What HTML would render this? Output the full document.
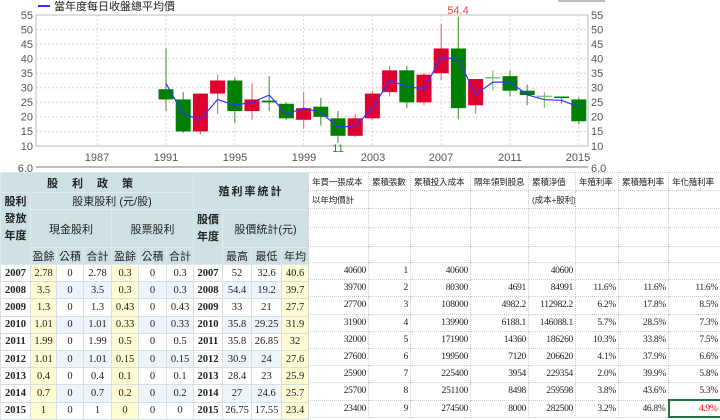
<!DOCTYPE html>
<html><head><meta charset="utf-8">
<style>
*{margin:0;padding:0;box-sizing:border-box}
body{width:720px;height:420px;overflow:hidden;background:#fff;font-family:"Liberation Sans","Noto Sans CJK TC",sans-serif;position:relative}
svg text{font-family:"Liberation Sans",sans-serif;font-size:11px;fill:#555}
table{border-collapse:collapse;position:absolute;top:172px;table-layout:fixed}
#L{left:0;width:308px}
#L td{border:1px solid #d4e0e6;text-align:center;font-family:"Liberation Serif","Noto Serif CJK SC",serif;font-size:10.5px;color:#222;padding:0;white-space:nowrap;overflow:hidden}
#L td.h{background:#cde1e5;font-family:"Liberation Sans","Noto Sans CJK TC",sans-serif;font-size:11px;color:#222;border-color:#dfeaee}
#L td.b{font-weight:bold;background:#fff}
#L tr.d td{height:17.2px}
#L tr.e td{background:#edf5fb}
#L tr.d td.y{background:#fffbd3}
#L tr.d td.b{background:#fff}
#R{left:308px;width:412px}
#R td{border:1px dotted #ccc;font-family:"Liberation Serif",serif;font-size:9.5px;color:#222;text-align:right;padding:0 2px;white-space:nowrap;overflow:hidden;letter-spacing:-0.3px}
#R tr.d td{height:17.2px}
#R td.t{text-align:left;font-family:"Liberation Sans","Noto Sans CJK TC",sans-serif;font-size:8.6px;padding-left:3px;letter-spacing:-0.2px}
</style></head><body>
<svg id="c" width="720" height="172" style="position:absolute;left:0;top:0">
<line x1="38" y1="6" x2="50" y2="6" stroke="#3333ff" stroke-width="2"/>
<text x="54" y="10" style="fill:#222;font-family:'Liberation Sans','Noto Sans CJK TC',sans-serif">當年度每日收盤總平均價</text>
<line x1="558" y1="1" x2="605" y2="1" stroke="#bbb" stroke-width="2"/>
<g id="grid"></g>
<rect x="36" y="15" width="552" height="131" fill="none" stroke="#bbb"/>
<g id="cand"></g>
<text x="33" y="19" text-anchor="end">55</text><text x="33" y="33.5" text-anchor="end">50</text><text x="33" y="48" text-anchor="end">45</text><text x="33" y="62.6" text-anchor="end">40</text><text x="33" y="77" text-anchor="end">35</text><text x="33" y="91.7" text-anchor="end">30</text><text x="33" y="106" text-anchor="end">25</text><text x="33" y="120.7" text-anchor="end">20</text><text x="33" y="135" text-anchor="end">15</text><text x="33" y="150" text-anchor="end">10</text>
<text x="591" y="19">55</text><text x="591" y="33.5">50</text><text x="591" y="48">45</text><text x="591" y="62.6">40</text><text x="591" y="77">35</text><text x="591" y="91.7">30</text><text x="591" y="106">25</text><text x="591" y="120.7">20</text><text x="591" y="135">15</text><text x="591" y="150">10</text>
<text x="97" y="161" text-anchor="middle">1987</text><text x="166" y="161" text-anchor="middle">1991</text><text x="235" y="161" text-anchor="middle">1995</text><text x="304" y="161" text-anchor="middle">1999</text><text x="373" y="161" text-anchor="middle">2003</text><text x="441" y="161" text-anchor="middle">2007</text><text x="510" y="161" text-anchor="middle">2011</text><text x="578" y="161" text-anchor="middle">2015</text>
<text x="458" y="14" text-anchor="middle" style="fill:#f04040">54.4</text>
<text x="338" y="152" text-anchor="middle" style="fill:#2a8a2a">11</text>
<line x1="36" y1="167" x2="588" y2="167" stroke="#bbb" stroke-width="2"/>
<text x="33" y="172" text-anchor="end">6.0</text><text x="591" y="172">6.0</text>
</svg>
<script>
(function(){
var X=function(y){return 166+(y-1991)*17.2},Y=function(v){return 146-(v-10)*2.911};
var g='';
for(var y=1987;y<=2015;y+=4){g+='<line x1="'+X(y)+'" y1="15" x2="'+X(y)+'" y2="146" stroke="#f3cccc" stroke-dasharray="2,2"/>';}
for(var v=15;v<=50;v+=5){g+='<line x1="36" y1="'+Y(v)+'" x2="588" y2="'+Y(v)+'" stroke="#f3cccc" stroke-dasharray="2,2"/>';}
document.getElementById('grid').innerHTML=g;
var G='#008000',R='#dd0030',LG='#7fc07f';
var d=[[1991,G,26,29.5,22,43.5],[1992,G,15,26,14.5,28.5],[1993,R,15,28,14,28],[1994,R,28,32.5,21,34.5],[1995,G,22,32.5,18,33.5],[1996,R,22,26,19,31.5],[1997,G,25,25.6,22,34],[1998,G,19.5,24.5,19,25],[1999,R,19,23,16,28.5],[2000,G,20,23.5,17,26.5],[2001,G,13.5,19.5,11,22],[2002,R,13.5,19.5,13,21],[2003,R,19.5,28,19,29],[2004,R,28.5,36,27,37.5],[2005,G,25,36,23,37.5],[2006,R,25,34.5,24,35],[2007,R,35,43.5,32.6,52],[2008,G,23,43.5,19.2,54.4],[2009,R,24,33,21,33],[2010,LG,33.4,33.7,29,36],[2011,G,29,34,27,36],[2012,G,27.5,29,24,31],[2013,LG,27,27.3,23,28.5],[2014,G,26.5,27,24.6,27],[2015,G,18.5,26,17.5,26.75]];
var s='';
d.forEach(function(a){var x=X(a[0]);var c=a[1];var wc=c==R?'#ee7080':(c==G?'#50a050':LG);
s+='<line x1="'+x+'" y1="'+Y(a[5])+'" x2="'+x+'" y2="'+Y(a[4])+'" stroke="'+wc+'" stroke-width="1.2"/>';
var h=Math.max(Y(a[2])-Y(a[3]),1.5);
s+='<rect x="'+(x-7.5)+'" y="'+Y(a[3])+'" width="15" height="'+h+'" fill="'+c+'"/>';});
var av=[31.5,21,19,26,24,25,27.5,21,23,21.5,16.5,16.8,23,32.5,30.5,29.5,40.6,39.7,27.7,31.9,32,27.6,25.9,25.7,23.4];
var p=av.map(function(v,i){return X(1991+i)+','+Y(v)}).join(' ');
s+='<polyline points="'+p+'" fill="none" stroke="#3333ff" stroke-width="1.2"/>';
document.getElementById('cand').innerHTML=s;
})();
</script>
<table id="L">
<colgroup><col style="width:30px"><col style="width:26px"><col style="width:27px"><col style="width:28px"><col style="width:27px"><col style="width:28px"><col style="width:27px"><col style="width:29px"><col style="width:29px"><col style="width:30px"><col style="width:27px"></colgroup>
<tr><td class="h" colspan="7" style="height:20px;font-weight:bold;letter-spacing:14px">股利政策</td><td class="h" colspan="4" rowspan="2" style="font-weight:bold;letter-spacing:2px">殖利率統計</td></tr>
<tr><td class="h" rowspan="3" style="font-weight:bold;line-height:17px;vertical-align:top;padding-top:1px">股利<br>發放<br>年度</td><td class="h" colspan="6" style="height:16px">股東股利 (元/股)</td></tr>
<tr><td class="h" colspan="3" style="height:38px">現金股利</td><td class="h" colspan="3">股票股利</td><td class="h" rowspan="2" style="font-weight:bold;line-height:17px;vertical-align:top;padding-top:2px">股價<br>年度</td><td class="h" colspan="3">股價統計(元)</td></tr>
<tr><td class="h" style="height:16px">盈餘</td><td class="h">公積</td><td class="h">合計</td><td class="h">盈餘</td><td class="h">公積</td><td class="h">合計</td><td class="h">最高</td><td class="h">最低</td><td class="h">年均</td></tr>
<tr class="d"><td class="b">2007</td><td class="y">2.78</td><td>0</td><td>2.78</td><td class="y">0.3</td><td>0</td><td>0.3</td><td class="b">2007</td><td>52</td><td>32.6</td><td class="y">40.6</td></tr>
<tr class="d e"><td class="b">2008</td><td class="y">3.5</td><td>0</td><td>3.5</td><td class="y">0.3</td><td>0</td><td>0.3</td><td class="b">2008</td><td>54.4</td><td>19.2</td><td class="y">39.7</td></tr>
<tr class="d"><td class="b">2009</td><td class="y">1.3</td><td>0</td><td>1.3</td><td class="y">0.43</td><td>0</td><td>0.43</td><td class="b">2009</td><td>33</td><td>21</td><td class="y">27.7</td></tr>
<tr class="d e"><td class="b">2010</td><td class="y">1.01</td><td>0</td><td>1.01</td><td class="y">0.33</td><td>0</td><td>0.33</td><td class="b">2010</td><td>35.8</td><td>29.25</td><td class="y">31.9</td></tr>
<tr class="d"><td class="b">2011</td><td class="y">1.99</td><td>0</td><td>1.99</td><td class="y">0.5</td><td>0</td><td>0.5</td><td class="b">2011</td><td>35.8</td><td>26.85</td><td class="y">32</td></tr>
<tr class="d e"><td class="b">2012</td><td class="y">1.01</td><td>0</td><td>1.01</td><td class="y">0.15</td><td>0</td><td>0.15</td><td class="b">2012</td><td>30.9</td><td>24</td><td class="y">27.6</td></tr>
<tr class="d"><td class="b">2013</td><td class="y">0.4</td><td>0</td><td>0.4</td><td class="y">0.1</td><td>0</td><td>0.1</td><td class="b">2013</td><td>28.4</td><td>23</td><td class="y">25.9</td></tr>
<tr class="d e"><td class="b">2014</td><td class="y">0.7</td><td>0</td><td>0.7</td><td class="y">0.2</td><td>0</td><td>0.2</td><td class="b">2014</td><td>27</td><td>24.6</td><td class="y">25.7</td></tr>
<tr class="d"><td class="b">2015</td><td class="y">1</td><td>0</td><td>1</td><td class="y">0</td><td>0</td><td>0</td><td class="b">2015</td><td>26.75</td><td>17.55</td><td class="y">23.4</td></tr>
</table>
<table id="R">
<colgroup><col style="width:60px"><col style="width:42px"><col style="width:60px"><col style="width:58px"><col style="width:47px"><col style="width:43px"><col style="width:50px"><col style="width:52px"></colgroup>
<tr><td class="t" style="height:18px">年買一張成本</td><td class="t">累積張數</td><td class="t">累積投入成本</td><td class="t">隔年領到股息</td><td class="t">累積淨值</td><td class="t">年殖利率</td><td class="t">累積殖利率</td><td class="t">年化殖利率</td></tr>
<tr><td class="t" style="height:18px">以年均價計</td><td></td><td></td><td></td><td class="t">(成本+股利)</td><td></td><td></td><td></td></tr>
<tr><td style="height:19px"></td><td></td><td></td><td></td><td></td><td></td><td></td><td></td></tr>
<tr><td style="height:19px"></td><td></td><td></td><td></td><td></td><td></td><td></td><td></td></tr>
<tr><td style="height:16px"></td><td></td><td></td><td></td><td></td><td></td><td></td><td></td></tr>
<tr class="d"><td>40600</td><td>1</td><td>40600</td><td></td><td>40600</td><td></td><td></td><td></td></tr>
<tr class="d"><td>39700</td><td>2</td><td>80300</td><td>4691</td><td>84991</td><td>11.6%</td><td>11.6%</td><td>11.6%</td></tr>
<tr class="d"><td>27700</td><td>3</td><td>108000</td><td>4982.2</td><td>112982.2</td><td>6.2%</td><td>17.8%</td><td>8.5%</td></tr>
<tr class="d"><td>31900</td><td>4</td><td>139900</td><td>6188.1</td><td>146088.1</td><td>5.7%</td><td>28.5%</td><td>7.3%</td></tr>
<tr class="d"><td>32000</td><td>5</td><td>171900</td><td>14360</td><td>186260</td><td>10.3%</td><td>33.8%</td><td>7.5%</td></tr>
<tr class="d"><td>27600</td><td>6</td><td>199500</td><td>7120</td><td>206620</td><td>4.1%</td><td>37.9%</td><td>6.6%</td></tr>
<tr class="d"><td>25900</td><td>7</td><td>225400</td><td>3954</td><td>229354</td><td>2.0%</td><td>39.9%</td><td>5.8%</td></tr>
<tr class="d"><td>25700</td><td>8</td><td>251100</td><td>8498</td><td>259598</td><td>3.8%</td><td>43.6%</td><td>5.3%</td></tr>
<tr class="d"><td>23400</td><td>9</td><td>274500</td><td>8000</td><td>282500</td><td>3.2%</td><td>46.8%</td><td style="border:2px solid #217346;color:#f00">4.9%</td></tr>
</table>
</body></html>
